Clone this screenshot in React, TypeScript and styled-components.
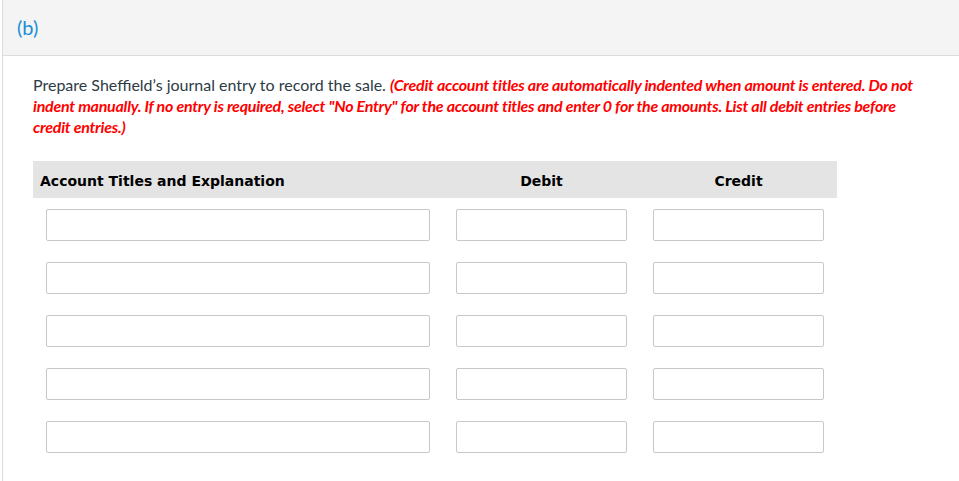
import React from "react";
import styled, { createGlobalStyle } from "styled-components";

const Global = createGlobalStyle`
  html, body { margin: 0; padding: 0; background: #fff; overflow: hidden; }
  body { font-family: Lato, "Open Sans", sans-serif; }
`;

const Panel = styled.div`
  margin-left: 2px;
  width: 1000px;
  height: 481px;
  border-left: 1px solid #dcdcdc;
  box-sizing: border-box;
`;

const PartHeader = styled.div`
  height: 56px;
  background: #f4f4f4;
  border-bottom: 1px solid #dcdcdc;
  display: flex;
  align-items: center;
  padding-left: 14px;
  padding-bottom: 2px;
  box-sizing: border-box;
`;

const PartLabel = styled.span`
  font-family: Lato, sans-serif;
  font-size: 20px;
  color: #1a8fd9;
`;

const Body = styled.div`
  padding: 18px 0 0 30px;
`;

const Prompt = styled.p`
  margin: 0;
  width: 884px;
  font-size: 16px;
  line-height: 21px;
  color: #2d3b45;
`;

const Instruction = styled.em`
  color: #f00;
  font-weight: 700;
  font-style: italic;
  letter-spacing: -0.25px;
`;

const Table = styled.div`
  margin-top: 24px;
  width: 804px;
  display: grid;
  grid-template-columns: 410px 197px 197px;
`;

const HeadCell = styled.div<{ $align?: "left" | "center" }>`
  height: 37px;
  background: #e4e4e4;
  display: flex;
  align-items: center;
  justify-content: ${(p) => (p.$align === "center" ? "center" : "flex-start")};
  padding-left: ${(p) => (p.$align === "center" ? "0" : "7px")};
  padding-top: 2px;
  box-sizing: border-box;
  font-family: "DejaVu Sans", Verdana, sans-serif;
  font-weight: 700;
  font-size: 14px;
  color: #000;
`;

const Cell = styled.div`
  padding: 11px 13px 10px;
`;

const Field = styled.input`
  display: block;
  width: 100%;
  height: 32px;
  box-sizing: border-box;
  border: 1px solid #c8c8c8;
  border-radius: 2px;
  background: #fff;
  margin: 0;
  padding: 0 6px;
  outline: none;
`;

export default function App() {
  const rows = [0, 1, 2, 3, 4];
  return (
    <>
      <Global />
      <Panel>
        <PartHeader>
          <PartLabel>(b)</PartLabel>
        </PartHeader>
        <Body>
          <Prompt>
            Prepare Sheffield’s journal entry to record the sale.{" "}
            <Instruction>
              (Credit account titles are automatically indented when amount is entered. Do not
              indent manually. If no entry is required, select "No Entry" for the account titles
              and enter 0 for the amounts. List all debit entries before credit entries.)
            </Instruction>
          </Prompt>
          <Table>
            <HeadCell>Account Titles and Explanation</HeadCell>
            <HeadCell $align="center">Debit</HeadCell>
            <HeadCell $align="center">Credit</HeadCell>
            {rows.map((r) => (
              <React.Fragment key={r}>
                <Cell>
                  <Field type="text" />
                </Cell>
                <Cell>
                  <Field type="text" />
                </Cell>
                <Cell>
                  <Field type="text" />
                </Cell>
              </React.Fragment>
            ))}
          </Table>
        </Body>
      </Panel>
    </>
  );
}
